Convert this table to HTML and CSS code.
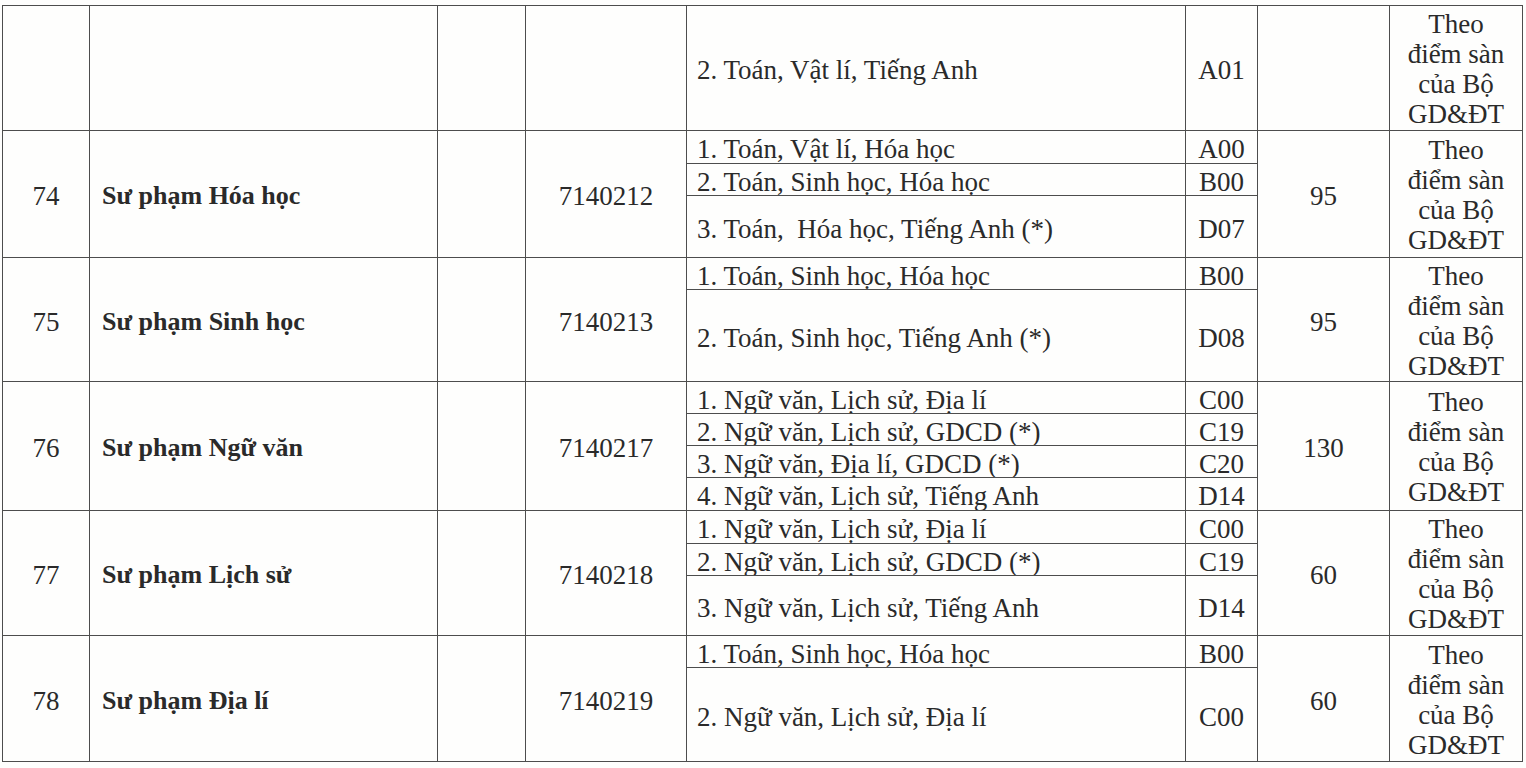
FILE: index.html
```html
<!DOCTYPE html>
<html lang="vi">
<head>
<meta charset="utf-8">
<title>Bảng ngành tuyển sinh</title>
<link rel="stylesheet" href="styles.css">
</head>
<body>
<table class="grid">
<colgroup>
<col class="c-stt"><col class="c-name"><col class="c-empty"><col class="c-code"><col class="c-combo"><col class="c-block"><col class="c-quota"><col class="c-note">
</colgroup>
<tbody>
<tr class="h125">
  <td class="num"></td><td class="name"></td><td></td><td class="center"></td>
  <td class="combo">2. Toán, Vật lí, Tiếng Anh</td><td class="center">A01</td><td class="center"></td>
  <td class="note">Theo<br>điểm sàn<br>của Bộ<br>GD&amp;ĐT</td>
</tr>

<tr class="h33">
  <td class="num" rowspan="3">74</td><td class="name" rowspan="3">Sư phạm Hóa học</td><td rowspan="3"></td><td class="center" rowspan="3">7140212</td>
  <td class="combo">1. Toán, Vật lí, Hóa học</td><td class="center">A00</td>
  <td class="center" rowspan="3">95</td>
  <td class="note" rowspan="3">Theo<br>điểm sàn<br>của Bộ<br>GD&amp;ĐT</td>
</tr>
<tr class="h32"><td class="combo">2. Toán, Sinh học, Hóa học</td><td class="center">B00</td></tr>
<tr class="h62"><td class="combo">3. Toán,&nbsp; Hóa học, Tiếng Anh (*)</td><td class="center">D07</td></tr>

<tr class="h32">
  <td class="num" rowspan="2">75</td><td class="name" rowspan="2">Sư phạm Sinh học</td><td rowspan="2"></td><td class="center" rowspan="2">7140213</td>
  <td class="combo">1. Toán, Sinh học, Hóa học</td><td class="center">B00</td>
  <td class="center" rowspan="2">95</td>
  <td class="note" rowspan="2">Theo<br>điểm sàn<br>của Bộ<br>GD&amp;ĐT</td>
</tr>
<tr class="h93"><td class="combo">2. Toán, Sinh học, Tiếng Anh (*)</td><td class="center">D08</td></tr>

<tr class="h32">
  <td class="num" rowspan="4">76</td><td class="name" rowspan="4">Sư phạm Ngữ văn</td><td rowspan="4"></td><td class="center" rowspan="4">7140217</td>
  <td class="combo">1. Ngữ văn, Lịch sử, Địa lí</td><td class="center">C00</td>
  <td class="center" rowspan="4">130</td>
  <td class="note" rowspan="4">Theo<br>điểm sàn<br>của Bộ<br>GD&amp;ĐT</td>
</tr>
<tr class="h32"><td class="combo">2. Ngữ văn, Lịch sử, GDCD (*)</td><td class="center">C19</td></tr>
<tr class="h32"><td class="combo">3. Ngữ văn, Địa lí, GDCD (*)</td><td class="center">C20</td></tr>
<tr class="h33"><td class="combo">4. Ngữ văn, Lịch sử, Tiếng Anh</td><td class="center">D14</td></tr>

<tr class="h33">
  <td class="num" rowspan="3">77</td><td class="name" rowspan="3">Sư phạm Lịch sử</td><td rowspan="3"></td><td class="center" rowspan="3">7140218</td>
  <td class="combo">1. Ngữ văn, Lịch sử, Địa lí</td><td class="center">C00</td>
  <td class="center" rowspan="3">60</td>
  <td class="note" rowspan="3">Theo<br>điểm sàn<br>của Bộ<br>GD&amp;ĐT</td>
</tr>
<tr class="h32"><td class="combo">2. Ngữ văn, Lịch sử, GDCD (*)</td><td class="center">C19</td></tr>
<tr class="h60"><td class="combo">3. Ngữ văn, Lịch sử, Tiếng Anh</td><td class="center">D14</td></tr>

<tr class="h32">
  <td class="num" rowspan="2">78</td><td class="name" rowspan="2">Sư phạm Địa lí</td><td rowspan="2"></td><td class="center" rowspan="2">7140219</td>
  <td class="combo">1. Toán, Sinh học, Hóa học</td><td class="center">B00</td>
  <td class="center" rowspan="2">60</td>
  <td class="note" rowspan="2">Theo<br>điểm sàn<br>của Bộ<br>GD&amp;ĐT</td>
</tr>
<tr class="h94"><td class="combo">2. Ngữ văn, Lịch sử, Địa lí</td><td class="center">C00</td></tr>
</tbody>
</table>
</body>
</html>
```
FILE: styles.css
```css
html, body {
  margin: 0;
  padding: 0;
  background: #fefefd;
}
body {
  padding: 5px 0 0 2px;
  font-family: "Liberation Serif", "Times New Roman", Tinos, serif;
  font-size: 27px;
  color: #2a2a2a;
}
.grid {
  border-collapse: collapse;
  table-layout: fixed;
  width: 1520px;
}
.c-stt { width: 87px; }
.c-name { width: 348px; }
.c-empty { width: 88px; }
.c-code { width: 161px; }
.c-combo { width: 499px; }
.c-block { width: 72px; }
.c-quota { width: 132px; }
.c-note { width: 133px; }
.grid td {
  border: 1px solid #4d4d4d;
  padding: 4px 0 0 0;
  vertical-align: middle;
  line-height: 26px;
  white-space: nowrap;
  overflow: hidden;
}
.num, .center, .note { text-align: center; }
.grid td.name {
  font-weight: bold;
  font-size: 26px;
  padding-left: 12px;
}
.grid td.combo { padding-left: 10px; }
.grid td.note {
  line-height: 30px;
  padding-top: 2px;
}
.h32 { height: 32px; }
.h33 { height: 33px; }
.h60 { height: 60px; }
.h62 { height: 62px; }
.h93 { height: 92px; }
.h94 { height: 94px; }
.h125 { height: 125px; }
```
